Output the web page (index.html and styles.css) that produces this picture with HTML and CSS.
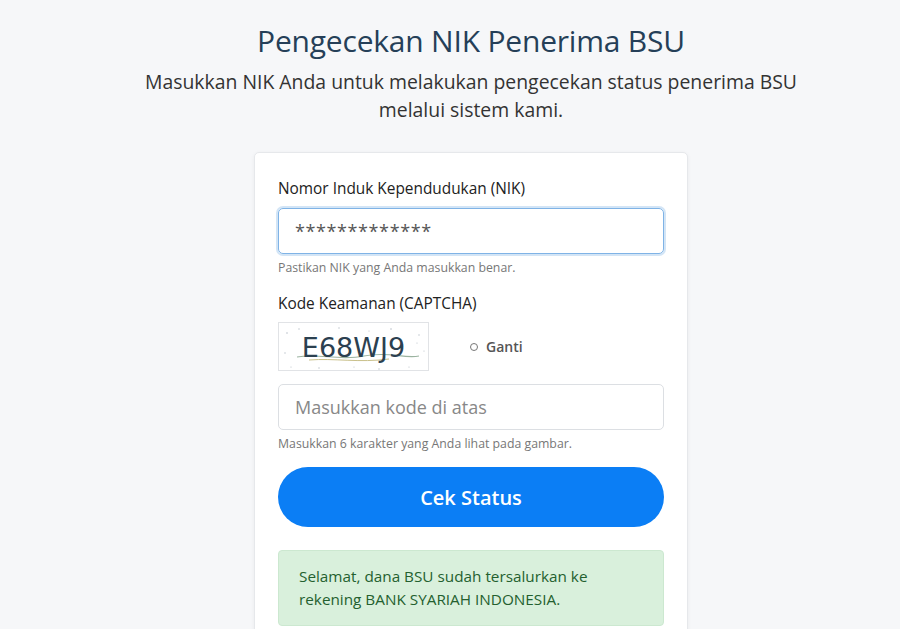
FILE: index.html
```html
<!DOCTYPE html>
<html lang="id">
<head>
<meta charset="utf-8">
<title>Pengecekan NIK Penerima BSU</title>
<link rel="stylesheet" href="styles.css">
</head>
<body>
<main class="page">
  <header class="intro">
    <h1 class="title">Pengecekan NIK Penerima BSU</h1>
    <p class="lead">Masukkan NIK Anda untuk melakukan pengecekan status penerima BSU melalui sistem kami.</p>
  </header>
  <section class="card">
    <div class="field">
      <label class="label">Nomor Induk Kependudukan (NIK)</label>
      <div class="input input-focus">*************</div>
      <small class="help">Pastikan NIK yang Anda masukkan benar.</small>
    </div>
    <div class="field">
      <label class="label label-captcha">Kode Keamanan (CAPTCHA)</label>
      <div class="captcha-row">
        <div class="captcha">
          <svg class="noise" width="151" height="49" viewBox="0 0 151 49">
            <path d="M18 34 C40 30 60 38 85 33 S125 36 140 33" stroke="#9bb3a0" stroke-width="1.2" fill="none"/>
            <path d="M30 37 C55 35 80 40 110 36" stroke="#c9c08a" stroke-width="1" fill="none"/>
            <g fill="#b8c0c8">
              <circle cx="8" cy="10" r="0.8"/><circle cx="20" cy="6" r="0.7"/><circle cx="35" cy="12" r="0.6"/>
              <circle cx="60" cy="5" r="0.7"/><circle cx="90" cy="8" r="0.6"/><circle cx="112" cy="6" r="0.8"/>
              <circle cx="140" cy="12" r="0.7"/><circle cx="145" cy="28" r="0.6"/><circle cx="6" cy="30" r="0.7"/>
              <circle cx="12" cy="44" r="0.6"/><circle cx="40" cy="45" r="0.7"/><circle cx="75" cy="44" r="0.6"/>
              <circle cx="100" cy="46" r="0.7"/><circle cx="130" cy="44" r="0.6"/><circle cx="138" cy="20" r="0.6"/>
            </g>
          </svg>
          <span class="captcha-text">E68WJ9</span>
        </div>
        <button class="refresh" type="button"><span class="ring"></span>Ganti</button>
      </div>
      <div class="input input-placeholder">Masukkan kode di atas</div>
      <small class="help">Masukkan 6 karakter yang Anda lihat pada gambar.</small>
    </div>
    <button class="submit" type="button">Cek Status</button>
    <div class="alert">Selamat, dana BSU sudah tersalurkan ke rekening BANK SYARIAH INDONESIA.</div>
  </section>
</main>
</body>
</html>
```
FILE: styles.css
```css
* { box-sizing: border-box; }
html, body { margin: 0; padding: 0; }
body {
  background: #f6f7f9;
  font-family: "Open Sans", "Noto Sans", sans-serif;
  color: #222;
  overflow: hidden;
}
.page {
  display: flex;
  flex-direction: column;
  align-items: center;
  padding-top: 20px;
  padding-left: 42px;
}
.intro {
  text-align: center;
  width: 700px;
}
.title {
  margin: 0;
  font-family: "Open Sans", sans-serif;
  font-weight: 400;
  font-size: 30px;
  line-height: 42px;
  color: #253f58;
  letter-spacing: -0.2px;
}
.lead {
  margin: 6px 0 0;
  font-size: 19.4px;
  line-height: 28px;
  color: #333;
}
.card {
  margin-top: 28px;
  width: 434px;
  background: #fff;
  border: 1px solid #e6e8eb;
  border-radius: 5px;
  box-shadow: 0 1px 4px rgba(0,0,0,0.05);
  padding: 25px 23px 30px;
  display: flex;
  flex-direction: column;
}
.field { display: flex; flex-direction: column; }
.label {
  font-size: 15.4px;
  line-height: 22px;
  font-weight: 500;
  color: #222;
  margin-bottom: 8px;
}
.label-captcha { margin-bottom: 7px; }
.input {
  height: 46px;
  border: 1px solid #dcdfe3;
  border-radius: 5px;
  padding: 0 16px;
  display: flex;
  align-items: center;
  font-size: 18px;
  color: #555;
}
.input-focus {
  border: 1.5px solid #7fb3e6;
  box-shadow: 0 0 0 2px rgba(128,180,230,0.35);
  letter-spacing: 0.6px;
}
.input-placeholder { color: #888; }
.help {
  font-size: 12.3px;
  line-height: 17px;
  color: #777;
  margin-top: 5px;
  margin-bottom: 17px;
}
.captcha-row {
  display: flex;
  align-items: center;
  margin-bottom: 13px;
}
.captcha {
  position: relative;
  width: 151px;
  height: 49px;
  border: 1px solid #e1e3e6;
  display: flex;
  align-items: center;
  justify-content: center;
  background: #fff;
}
.noise { position: absolute; left: 0; top: 0; }
.captcha-text {
  position: relative;
  font-family: "DejaVu Sans", sans-serif;
  font-size: 27px;
  color: #2b4050;
  top: 1px;
}
.refresh {
  margin-left: 41px;
  display: flex;
  align-items: center;
  gap: 8px;
  border: none;
  background: none;
  padding: 0;
  font-family: "Open Sans", sans-serif;
  font-size: 14px;
  font-weight: 600;
  color: #555;
}
.ring {
  width: 8px;
  height: 8px;
  border: 1.3px solid #777;
  border-radius: 50%;
}
.submit {
  margin-top: -2px;
  height: 60px;
  border: none;
  border-radius: 30px;
  background: #0b7ef5;
  color: #fff;
  font-family: "Open Sans", sans-serif;
  font-size: 20px;
  font-weight: 600;
}
.alert {
  margin-top: 23px;
  background: #d9f0dc;
  border: 1px solid #cce8d0;
  border-radius: 4px;
  color: #24602f;
  font-size: 15.3px;
  line-height: 23px;
  padding: 14px 20px 14px;
}
```
